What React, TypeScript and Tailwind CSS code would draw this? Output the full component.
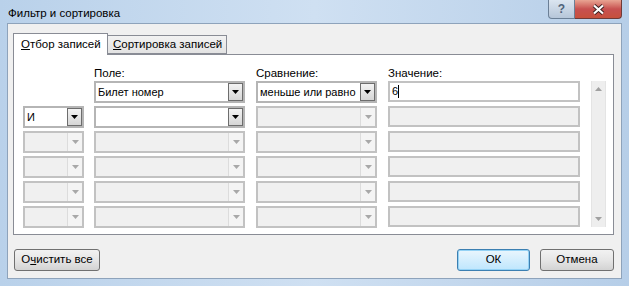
import type { FC } from 'react';

const font = { fontFamily: '"Liberation Sans", "DejaVu Sans", sans-serif' };

interface ComboProps {
  width: string;
  value?: string;
  enabled?: boolean;
}

const Arrow: FC<{ color: string }> = ({ color }) => (
  <svg width="7" height="4" viewBox="0 0 7 4">
    <path d="M0 0 L7 0 L3.5 4 Z" fill={color} />
  </svg>
);

const Combo: FC<ComboProps> = ({ width, value, enabled }) =>
  enabled ? (
    <div className={`${width} h-[22px] flex items-stretch border-2 border-[#b5b5b5] bg-white`}>
      <span className="flex-1 pl-[2px] text-[11px] leading-[18px] text-black whitespace-nowrap overflow-hidden">{value}</span>
      <span className="w-[15px] flex items-center justify-center border border-[#6d6d6d] bg-gradient-to-b from-[#f3f3f3] to-[#d6d6d6]">
        <Arrow color="#000" />
      </span>
    </div>
  ) : (
    <div className={`${width} h-[22px] flex items-stretch border-2 border-[#c2c2c2] bg-[#f0f0f0]`}>
      <span className="flex-1" />
      <span className="w-[15px] flex items-center justify-center border-l border-[#dcdcdc] bg-[#f4f4f4]">
        <Arrow color="#a8a8a8" />
      </span>
    </div>
  );

const TextField: FC<{ value?: string; enabled?: boolean }> = ({ value, enabled }) =>
  enabled ? (
    <div className="w-[192px] h-[21px] border-2 border-[#c2c2c2] bg-white px-[2px] flex items-center text-[11px] text-black">
      {value}
      <span className="w-px h-[13px] bg-black" />
    </div>
  ) : (
    <div className="w-[192px] h-[21px] border-2 border-[#c2c2c2] bg-[#f0f0f0]" />
  );

const WinButton: FC<{ label: string; u?: number; width: string; primary?: boolean }> = ({ label, u, width, primary }) => (
  <button
    className={`${width} h-[22px] rounded-[3px] border text-[11.5px] text-black whitespace-nowrap ${
      primary
        ? 'border-[#3c7fb1] bg-gradient-to-b from-[#eaf6fd] to-[#bee6fd] shadow-[inset_0_0_0_1px_#94d2f5]'
        : 'border-[#707070] bg-gradient-to-b from-[#f2f2f2] via-[#e6e6e6] to-[#d3d3d3]'
    }`}
  >
    {u === undefined ? (
      label
    ) : (
      <>
        {label.slice(0, u)}
        <span className="underline">{label[u]}</span>
        {label.slice(u + 1)}
      </>
    )}
  </button>
);

export default function App() {
  const rows = [1, 2, 3, 4, 5];
  return (
    <div
      style={font}
      className="w-[629px] h-[286px] flex flex-col bg-gradient-to-r from-[#b9d1ea] via-[#cfe0f2] to-[#b6cee8] overflow-hidden"
    >
      {/* title bar */}
      <div className="h-[23px] flex items-start justify-between pl-[8px] pr-[7px]">
        <span className="mt-[5px] text-[11.5px] text-black whitespace-nowrap">Фильтр и сортировка</span>
        <div className="flex">
          <div className="w-[27px] h-[19px] rounded-bl-[4px] border border-[#6b7f96] border-t-0 bg-gradient-to-b from-[#dbe5f0] to-[#b6c6d9] flex items-center justify-center text-[12px] font-bold text-[#4f637a]">
            ?
          </div>
          <div className="w-[47px] h-[19px] rounded-br-[4px] border border-[#6e3a38] border-t-0 border-l-0 bg-gradient-to-b from-[#e8a493] via-[#c75050] to-[#c7503c] flex items-center justify-center">
            <svg width="13" height="11" viewBox="0 0 13 11">
              <path d="M2 1.5 L11 9.5 M11 1.5 L2 9.5" stroke="#3b2020" strokeWidth="4" />
              <path d="M2 1.5 L11 9.5 M11 1.5 L2 9.5" stroke="#fff" strokeWidth="2.2" />
            </svg>
          </div>
        </div>
      </div>

      {/* client area */}
      <div className="ml-[7px] mr-[7px] h-[256px] border border-[#8ea3bb] bg-[#f0f0f0] flex flex-col pl-[5px] pr-[7px] pt-[8px]">
        {/* tabs */}
        <div className="flex items-end h-[22px] text-[11.5px] text-black whitespace-nowrap">
          <div className="h-[22px] w-[95px] bg-white border border-b-0 border-[#898c95] flex items-center pl-[7px] relative z-10 -mb-px">
            <span>
              <span className="underline">О</span>тбор записей
            </span>
          </div>
          <div className="h-[19px] w-[119px] bg-gradient-to-b from-[#f2f2f2] to-[#e3e3e3] border border-l-0 border-[#898c95] flex items-center pl-[5px]">
            <span>
              <span className="underline">С</span>ортировка записей
            </span>
          </div>
        </div>

        {/* tab panel */}
        <div className="h-[181px] border border-[#898c95] bg-white pl-[9px] pt-[10px] text-[11.5px] text-black">
          <div className="flex h-[15px] mb-[1px] whitespace-nowrap">
            <span className="w-[71px]" />
            <span className="w-[162px]">Поле:</span>
            <span className="w-[132px]">Сравнение:</span>
            <span>Значение:</span>
          </div>
          <div className="flex">
            <div className="flex flex-col gap-[3px]">
              <div className="flex items-start">
                <span className="w-[61px] mr-[10px]" />
                <div className="mr-[11px]">
                  <Combo width="w-[151px]" value="Билет номер" enabled />
                </div>
                <div className="mr-[11px]">
                  <Combo width="w-[121px]" value="меньше или равно" enabled />
                </div>
                <TextField value="6" enabled />
              </div>
              {rows.map((r) => (
                <div key={r} className="flex items-start">
                  <div className="mr-[10px]">
                    <Combo width="w-[61px]" value="И" enabled={r === 1} />
                  </div>
                  <div className="mr-[11px]">
                    <Combo width="w-[151px]" enabled={r === 1} />
                  </div>
                  <div className="mr-[11px]">
                    <Combo width="w-[121px]" />
                  </div>
                  <TextField />
                </div>
              ))}
            </div>
            <div className="ml-[11px] w-[15px] h-[146px] bg-[#eeeeee] border-x border-[#e4e4e4] flex flex-col justify-between items-center py-[6px]">
              <svg width="7" height="4" viewBox="0 0 7 4">
                <path d="M0 4 L7 4 L3.5 0 Z" fill="#a0a0a0" />
              </svg>
              <Arrow color="#a0a0a0" />
            </div>
          </div>
        </div>

        {/* buttons */}
        <div className="flex mt-[14px] pl-[1px]">
          <WinButton label="Очистить все" u={1} width="w-[86px]" />
          <span className="flex-1" />
          <WinButton label="ОК" width="w-[73px]" primary />
          <span className="w-[10px]" />
          <WinButton label="Отмена" width="w-[74px]" />
        </div>
      </div>
    </div>
  );
}
